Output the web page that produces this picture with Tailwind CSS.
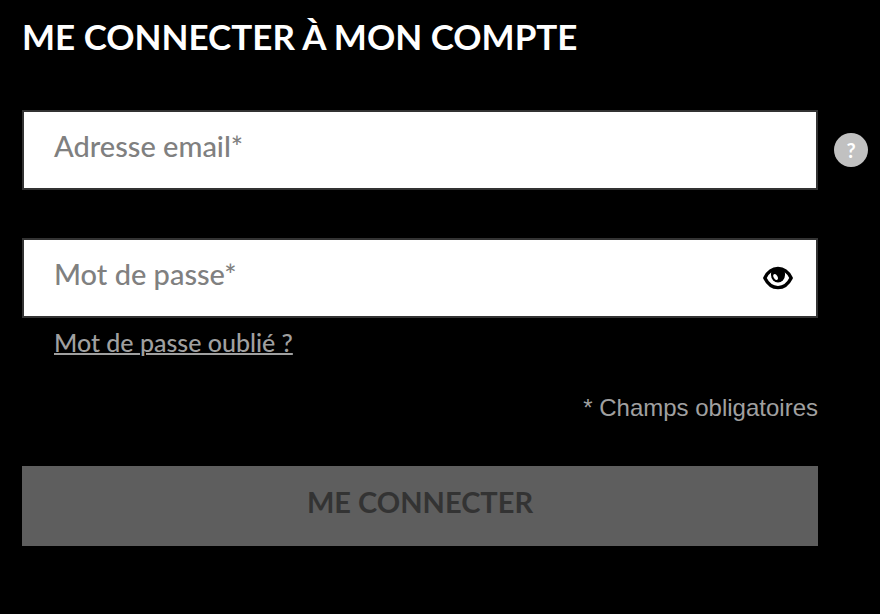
<!DOCTYPE html>
<html lang="fr">
<head>
<meta charset="utf-8">
<meta name="viewport" content="width=device-width, initial-scale=1">
<title>Me connecter à mon compte</title>
<script src="https://cdn.jsdelivr.net/npm/@tailwindcss/browser@4"></script>
</head>
<body class="min-h-screen bg-black font-[Lato,sans-serif]">
<main class="pt-3 pr-3 pb-16 pl-[22px]">
  <h1 class="text-[35px] leading-12 font-bold text-white">ME CONNECTER À MON COMPTE</h1>
  <form class="mt-[50px]">
    <div class="flex items-center gap-4">
      <div class="relative min-w-0 flex-1">
        <input id="email" type="email" placeholder=" " class="peer block h-20 w-full border-2 border-[#333] bg-white px-[30px] pb-2 text-[29px] font-medium text-black outline-none">
        <label for="email" class="absolute top-4 left-8 hidden text-[29px] leading-10 font-medium text-[#808080] peer-placeholder-shown:block">Adresse email*</label>
      </div>
      <button type="button" aria-label="Aide" class="size-[34px] shrink-0 rounded-full bg-[#c1c1c1] text-center text-xl leading-8 font-bold text-white">?</button>
    </div>
    <div class="mr-[50px]">
      <div class="relative mt-12">
        <input id="password" type="password" placeholder=" " class="peer block h-20 w-full border-2 border-[#333] bg-white pr-20 pb-2 pl-[30px] text-[29px] font-medium text-black outline-none">
        <label for="password" class="absolute top-4 left-8 hidden text-[29px] leading-10 font-medium text-[#808080] peer-placeholder-shown:block">Mot de passe*</label>
        <button type="button" aria-label="Afficher le mot de passe" class="absolute inset-y-0 right-6 flex items-center">
          <svg class="h-6 w-8" viewBox="0 0 32 24" aria-hidden="true">
            <path d="M2.800 12C5.500 6.500 10 2.400 16 2.400S26.500 6.500 29.200 12C26.500 17.500 22 21.600 16 21.600S5.500 17.500 2.800 12Z" fill="#fff" stroke="#000" stroke-width="3.400" stroke-linejoin="round"/>
            <path d="M10 3.500H22C23 5.500 23 7.500 23 9A7 7.500 0 0 1 9 9C9 7 9 5.500 10 3.500Z"/>
            <ellipse cx="13.600" cy="11" rx="1.900" ry="3.200" transform="rotate(-30 13.600 11)" fill="#fff"/>
          </svg>
        </button>
      </div>
      <a href="#" class="mt-2 ml-8 inline-block text-[25px] leading-8 font-medium text-[#a0a0a0] underline decoration-2">Mot de passe oublié ?</a>
      <p class="mt-[34px] text-right font-['Liberation_Sans',Arial,sans-serif] text-2xl leading-8 text-[#a0a0a0]">* Champs obligatoires</p>
      <button type="submit" disabled class="mt-[42px] block h-20 w-full bg-[#5e5e5e] pb-2 text-[29px] font-bold text-[#333]">ME CONNECTER</button>
    </div>
  </form>
</main>
</body>
</html>
